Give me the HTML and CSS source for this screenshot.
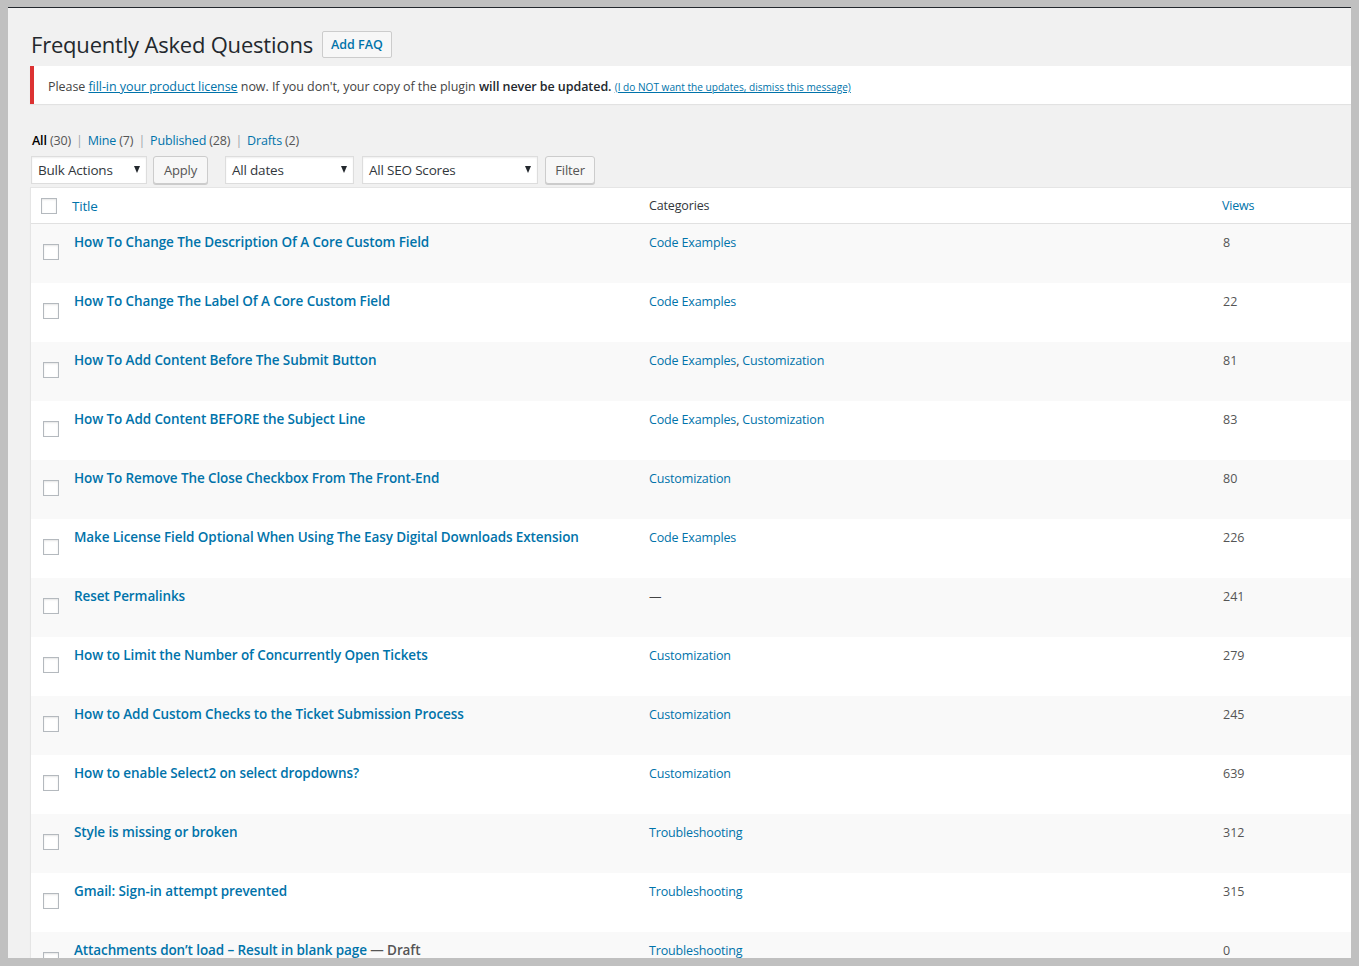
FILE: index.html
```html
<!DOCTYPE html>
<html>
<head>
<meta charset="utf-8">
<link rel="stylesheet" href="styles.css">
</head>
<body>
<div class="frame">
  <div class="wrap">
    <div class="head">
      <h1 class="page-title">Frequently Asked Questions</h1>
      <a class="title-action">Add FAQ</a>
    </div>
    <div class="notice">
      <p>Please <a class="ul">fill-in your product license</a> now. If you don't, your copy of the plugin <b>will never be updated.</b> <a class="ul small">(I do NOT want the updates, dismiss this message)</a></p>
    </div>
    <ul class="subsub">
      <li><span class="current">All</span> <span class="count">(30)</span></li>
      <li class="sep">|</li>
      <li><a>Mine</a> <span class="count">(7)</span></li>
      <li class="sep">|</li>
      <li><a>Published</a> <span class="count">(28)</span></li>
      <li class="sep">|</li>
      <li><a>Drafts</a> <span class="count">(2)</span></li>
    </ul>
    <div class="tablenav">
      <div class="select w-bulk"><span>Bulk Actions</span><i class="arrow"></i></div>
      <div class="btn w-apply">Apply</div>
      <div class="select w-dates"><span>All dates</span><i class="arrow"></i></div>
      <div class="select w-seo"><span>All SEO Scores</span><i class="arrow"></i></div>
      <div class="btn w-filter">Filter</div>
    </div>
    <div class="table">
      <div class="row head-row">
        <div class="cb"><span class="box"></span></div>
        <div class="c-title th-link">Title</div>
        <div class="c-cat th">Categories</div>
        <div class="c-views th-link">Views</div>
      </div>
      <div class="row">
        <div class="cb"><span class="box"></span></div>
        <div class="c-title"><a class="rt">How To Change The Description Of A Core Custom Field</a></div>
        <div class="c-cat"><a>Code Examples</a></div>
        <div class="c-views">8</div>
      </div>
      <div class="row">
        <div class="cb"><span class="box"></span></div>
        <div class="c-title"><a class="rt">How To Change The Label Of A Core Custom Field</a></div>
        <div class="c-cat"><a>Code Examples</a></div>
        <div class="c-views">22</div>
      </div>
      <div class="row">
        <div class="cb"><span class="box"></span></div>
        <div class="c-title"><a class="rt">How To Add Content Before The Submit Button</a></div>
        <div class="c-cat"><a>Code Examples</a>, <a>Customization</a></div>
        <div class="c-views">81</div>
      </div>
      <div class="row">
        <div class="cb"><span class="box"></span></div>
        <div class="c-title"><a class="rt">How To Add Content BEFORE the Subject Line</a></div>
        <div class="c-cat"><a>Code Examples</a>, <a>Customization</a></div>
        <div class="c-views">83</div>
      </div>
      <div class="row">
        <div class="cb"><span class="box"></span></div>
        <div class="c-title"><a class="rt">How To Remove The Close Checkbox From The Front-End</a></div>
        <div class="c-cat"><a>Customization</a></div>
        <div class="c-views">80</div>
      </div>
      <div class="row">
        <div class="cb"><span class="box"></span></div>
        <div class="c-title"><a class="rt">Make License Field Optional When Using The Easy Digital Downloads Extension</a></div>
        <div class="c-cat"><a>Code Examples</a></div>
        <div class="c-views">226</div>
      </div>
      <div class="row">
        <div class="cb"><span class="box"></span></div>
        <div class="c-title"><a class="rt">Reset Permalinks</a></div>
        <div class="c-cat dash">—</div>
        <div class="c-views">241</div>
      </div>
      <div class="row">
        <div class="cb"><span class="box"></span></div>
        <div class="c-title"><a class="rt">How to Limit the Number of Concurrently Open Tickets</a></div>
        <div class="c-cat"><a>Customization</a></div>
        <div class="c-views">279</div>
      </div>
      <div class="row">
        <div class="cb"><span class="box"></span></div>
        <div class="c-title"><a class="rt">How to Add Custom Checks to the Ticket Submission Process</a></div>
        <div class="c-cat"><a>Customization</a></div>
        <div class="c-views">245</div>
      </div>
      <div class="row">
        <div class="cb"><span class="box"></span></div>
        <div class="c-title"><a class="rt">How to enable Select2 on select dropdowns?</a></div>
        <div class="c-cat"><a>Customization</a></div>
        <div class="c-views">639</div>
      </div>
      <div class="row">
        <div class="cb"><span class="box"></span></div>
        <div class="c-title"><a class="rt">Style is missing or broken</a></div>
        <div class="c-cat"><a>Troubleshooting</a></div>
        <div class="c-views">312</div>
      </div>
      <div class="row">
        <div class="cb"><span class="box"></span></div>
        <div class="c-title"><a class="rt">Gmail: Sign-in attempt prevented</a></div>
        <div class="c-cat"><a>Troubleshooting</a></div>
        <div class="c-views">315</div>
      </div>
      <div class="row">
        <div class="cb"><span class="box"></span></div>
        <div class="c-title"><a class="rt">Attachments don’t load – Result in blank page</a><span class="state"> — Draft</span></div>
        <div class="c-cat"><a>Troubleshooting</a></div>
        <div class="c-views">0</div>
      </div>
    </div>
  </div>
</div>
</body>
</html>
```

FILE: styles.css
```css
* { box-sizing: border-box; }
html, body { margin: 0; padding: 0; }
body {
  background: #c0c0c0;
  width: 1359px;
  height: 966px;
  overflow: hidden;
  font-family: "Open Sans", "Noto Sans", sans-serif;
  font-size: 13px;
  color: #444;
}
a { color: #0073aa; text-decoration: none; }
.frame {
  margin: 7px 0 0 8px;
  width: 1343px;
  height: 951px;
  border-top: 1px solid #23282d;
  background: #f1f1f1;
  overflow: hidden;
}
.wrap {
  padding: 0 0 0 22px;
  width: 1400px;
}
.head {
  display: flex;
  align-items: center;
  gap: 9px;
  padding-top: 14px;
  height: 58px;
}
.page-title {
  margin: 0;
  font-size: 22px;
  font-weight: 400;
  color: #23282d;
  line-height: 29px;
  padding-left: 1px;
  letter-spacing: -0.2px;
}
.title-action {
  display: inline-block;
  border: 1px solid #ccc;
  background: #f7f7f7;
  border-radius: 2px;
  font-size: 12.5px;
  font-weight: 600;
  color: #0073aa;
  padding: 0 8px;
  height: 27px;
  line-height: 25px;
  margin-top: 1px;
}
.notice {
  width: 1330px;
  background: #fff;
  border-left: 4px solid #dc3232;
  box-shadow: 0 1px 1px rgba(0,0,0,.06);
  padding: 1px 12px 1px 14px;
  height: 38px;
}
.notice p {
  margin: 0;
  padding-top: 3px;
  line-height: 34px;
  font-size: 12.5px;
  color: #444;
  letter-spacing: -0.06px;
}
.notice b { font-weight: 600; color: #23282d; }
.ul { text-decoration: underline; }
.small { font-size: 10.1px; letter-spacing: 0; }
.subsub {
  list-style: none;
  margin: 0;
  padding: 0 0 0 2px;
  display: flex;
  gap: 5px;
  height: 73px;
  line-height: 20px;
  padding-top: 27px;
  font-size: 12.5px;
  letter-spacing: -0.15px;
  color: #666;
}
.subsub .current { color: #000; font-weight: 600; }
.subsub .count { color: #555; }
.subsub .sep { color: #a0a5aa; }
.tablenav {
  display: flex;
  gap: 0;
  height: 28px;
  margin-top: -21px;
  padding-left: 1px;
}
.select {
  display: flex;
  align-items: center;
  justify-content: space-between;
  height: 28px;
  background: #fff;
  border: 1px solid #ddd;
  box-shadow: inset 0 1px 2px rgba(0,0,0,.07);
  padding: 0 6px 0 6px;
  font-size: 13.5px;
  color: #32373c;
  letter-spacing: -0.2px;
}
.arrow {
  width: 0; height: 0;
  border-left: 3.5px solid transparent;
  border-right: 3.5px solid transparent;
  border-top: 7px solid #23282d;
  margin-top: -2px;
}
.btn {
  height: 28px;
  border: 1px solid #ccc;
  background: #f7f7f7;
  border-radius: 3px;
  box-shadow: 0 1px 0 #ccc;
  color: #555;
  font-size: 13px;
  line-height: 26px;
  text-align: center;
  letter-spacing: -0.15px;
}
.w-bulk { width: 116px; }
.w-apply { width: 55px; margin-left: 6px; }
.w-dates { width: 129px; margin-left: 17px; }
.w-seo { width: 176px; margin-left: 8px; }
.w-filter { width: 50px; margin-left: 7px; }
.table {
  margin-top: 3px;
  width: 1340px;
  border: 1px solid #e5e5e5;
  background: #fff;
  box-shadow: 0 1px 1px rgba(0,0,0,.04);
}
.row {
  display: grid;
  grid-template-columns: 33px 585px 562px 1fr;
  height: 59px;
  background: #fff;
}
.row:nth-child(even) { background: #f9f9f9; }
.head-row {
  height: 36px;
  border-bottom: 1px solid #e1e1e1;
  align-items: center;
  font-size: 13.5px;
  letter-spacing: -0.2px;
}
.box {
  display: block;
  width: 16px;
  height: 16px;
  border: 1px solid #b4b9be;
  background: #fff;
  box-shadow: inset 0 1px 2px rgba(0,0,0,.1);
}
.row .cb { padding: 20px 0 0 12px; }
.head-row .cb { padding: 0 0 0 10px; }
.c-title { padding: 9px 0 0 10px; }
.c-cat { padding: 10px 0 0 0; font-size: 12.5px; letter-spacing: -0.15px; }
.c-views { padding: 10px 0 0 12px; font-size: 12.5px; color: #555; }
.head-row .c-title, .head-row .c-cat, .head-row .c-views { padding-top: 0; }
.head-row .c-title { padding-left: 8px; }
.head-row .c-views { padding-left: 11px; }
.th-link { color: #0073aa; }
.th { color: #32373c; }
.rt {
  font-size: 13.5px;
  font-weight: 600;
  letter-spacing: -0.1px;
}
.state { font-size: 13.5px; font-weight: 600; color: #555; letter-spacing: -0.1px; }
.dash { color: #444; }
```
